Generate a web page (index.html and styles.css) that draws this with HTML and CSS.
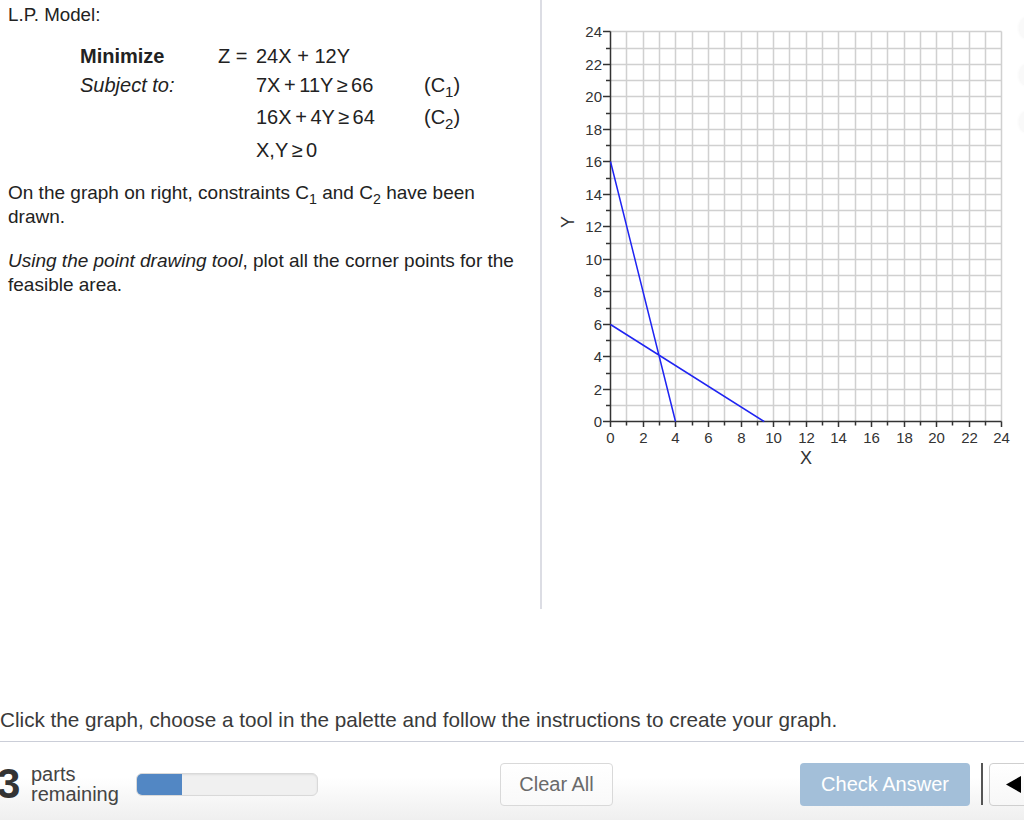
FILE: index.html
```html
<!DOCTYPE html>
<html>
<head>
<meta charset="utf-8">
<link rel="stylesheet" href="styles.css">
</head>
<body>
<div class="top">
  <div class="left">
    <p class="title">L.P. Model:</p>
    <div class="model">
      <span class="b">Minimize</span><span>Z =</span><span>24X + 12Y</span>
      <span class="i c1">Subject to:</span><span class="c3">7X + 11Y ≥ 66</span><span>(C<sub>1</sub>)</span>
      <span class="c3">16X + 4Y ≥ 64</span><span>(C<sub>2</sub>)</span>
      <span class="c3">X,Y ≥ 0</span>
    </div>
    <p class="desc">On the graph on right, constraints C<sub>1</sub> and C<sub>2</sub> have been drawn.</p>
    <p class="desc second"><i>Using the point drawing tool</i>, plot all the corner points for the feasible area.</p>
  </div>
  <div class="right">
    <svg class="graph" width="482" height="609" viewBox="542 0 482 609" xmlns="http://www.w3.org/2000/svg">
      <path class="grid" d="M626.5 31.5V421.5M643.5 31.5V421.5M659.5 31.5V421.5M675.5 31.5V421.5M692.5 31.5V421.5M708.5 31.5V421.5M724.5 31.5V421.5M741.5 31.5V421.5M757.5 31.5V421.5M773.5 31.5V421.5M789.5 31.5V421.5M806.5 31.5V421.5M822.5 31.5V421.5M838.5 31.5V421.5M855.5 31.5V421.5M871.5 31.5V421.5M887.5 31.5V421.5M904.5 31.5V421.5M920.5 31.5V421.5M936.5 31.5V421.5M952.5 31.5V421.5M969.5 31.5V421.5M985.5 31.5V421.5M1001.5 31.5V421.5
      M610.5 405.5H1001.5M610.5 389.5H1001.5M610.5 373.5H1001.5M610.5 356.5H1001.5M610.5 340.5H1001.5M610.5 324.5H1001.5M610.5 308.5H1001.5M610.5 291.5H1001.5M610.5 275.5H1001.5M610.5 259.5H1001.5M610.5 243.5H1001.5M610.5 226.5H1001.5M610.5 210.5H1001.5M610.5 194.5H1001.5M610.5 178.5H1001.5M610.5 161.5H1001.5M610.5 145.5H1001.5M610.5 129.5H1001.5M610.5 113.5H1001.5M610.5 96.5H1001.5M610.5 80.5H1001.5M610.5 64.5H1001.5M610.5 48.5H1001.5M610.5 31.5H1001.5"/>
      <path class="axis" d="M610.5 31.5V421.5H1001.5
      M603 421.5H610.5M606 405.5H610.5M603 389.5H610.5M606 373.5H610.5M603 356.5H610.5M606 340.5H610.5M603 324.5H610.5M606 308.5H610.5M603 291.5H610.5M606 275.5H610.5M603 259.5H610.5M606 243.5H610.5M603 226.5H610.5M606 210.5H610.5M603 194.5H610.5M606 178.5H610.5M603 161.5H610.5M606 145.5H610.5M603 129.5H610.5M606 113.5H610.5M603 96.5H610.5M606 80.5H610.5M603 64.5H610.5M606 48.5H610.5M603 31.5H610.5
      M610.5 421.5V427M626.5 421.5V425.5M643.5 421.5V427M659.5 421.5V425.5M675.5 421.5V427M692.5 421.5V425.5M708.5 421.5V427M724.5 421.5V425.5M741.5 421.5V427M757.5 421.5V425.5M773.5 421.5V427M789.5 421.5V425.5M806.5 421.5V427M822.5 421.5V425.5M838.5 421.5V427M855.5 421.5V425.5M871.5 421.5V427M887.5 421.5V425.5M904.5 421.5V427M920.5 421.5V425.5M936.5 421.5V427M952.5 421.5V425.5M969.5 421.5V427M985.5 421.5V425.5M1001.5 421.5V427"/>
      <g class="ylab">
        <text x="602" y="426.5">0</text><text x="602" y="394.5">2</text><text x="602" y="361.5">4</text><text x="602" y="329.5">6</text><text x="602" y="296.5">8</text><text x="602" y="264.5">10</text><text x="602" y="231.5">12</text><text x="602" y="199.5">14</text><text x="602" y="166.5">16</text><text x="602" y="134.5">18</text><text x="602" y="101.5">20</text><text x="602" y="69.5">22</text><text x="602" y="36.5">24</text>
      </g>
      <g class="xlab">
        <text x="610.5" y="443">0</text><text x="643.5" y="443">2</text><text x="675.5" y="443">4</text><text x="708.5" y="443">6</text><text x="741.5" y="443">8</text><text x="773.5" y="443">10</text><text x="806.5" y="443">12</text><text x="838.5" y="443">14</text><text x="871.5" y="443">16</text><text x="904.5" y="443">18</text><text x="936.5" y="443">20</text><text x="969.5" y="443">22</text><text x="1001.5" y="443">24</text>
      </g>
      <text class="atitle" x="806" y="464">X</text>
      <text class="atitle" x="568" y="228" transform="rotate(-90 568 222)">Y</text>
      <path class="con" d="M610.5 161.5L675.5 421.5M610.5 324.5L764.2 421.5"/>
    </svg>
  </div>
</div>
<div class="palette">
  <div class="tool"></div>
  <div class="tool"></div>
  <div class="tool"></div>
</div>
<p class="hint">Click the graph, choose a tool in the palette and follow the instructions to create your graph.</p>
<div class="footer">
  <span class="count">3</span>
  <span class="parts">parts<br>remaining</span>
  <div class="progress"><div class="fill"></div></div>
  <button class="btn clear">Clear All</button>
  <button class="btn check">Check Answer</button>
  <span class="sep"></span>
  <button class="btn nav"><svg width="16" height="17" viewBox="0 0 16 17"><polygon points="15,0 15,17 0,8.5" fill="#000"/></svg></button>
</div>
</body>
</html>
```

FILE: styles.css
```css
html, body {
  margin: 0;
  padding: 0;
}
body {
  width: 1024px;
  height: 821px;
  overflow: hidden;
  background: #fff;
  color: #222;
  font-family: "Liberation Sans", Arial, Helvetica, sans-serif;
  position: relative;
}
.top {
  display: flex;
  height: 609px;
}
.left {
  flex: none;
  width: 540px;
  border-right: 2px solid #dcdde4;
}
.right {
  flex: none;
  width: 482px;
}
.graph {
  display: block;
}
.title {
  margin: 0;
  padding: 4px 0 0 8px;
  font-size: 18.75px;
  line-height: 22px;
}
.model {
  display: grid;
  grid-template-columns: 138px 38px 168px auto;
  grid-template-rows: 30px 29px 34px 32px;
  align-items: center;
  margin: 15px 0 0 80px;
  font-size: 20px;
  white-space: nowrap;
}
.model .b { font-weight: bold; }
.model .i { font-style: italic; }
.model .c1 { grid-column: 1 / 3; }
.model .c3 {
  grid-column: 3;
  word-spacing: -2px;
}
sub {
  font-size: 0.75em;
  vertical-align: -0.32em;
  line-height: 0;
}
.desc {
  margin: 15px 0 0 8px;
  width: 512px;
  font-size: 19px;
  line-height: 24px;
}
.desc.second {
  margin-top: 20px;
}
.grid {
  fill: none;
  stroke: #d0d0d0;
  stroke-width: 1.5;
}
.axis {
  fill: none;
  stroke: #333;
  stroke-width: 1.5;
}
.con {
  fill: none;
  stroke: #1f24f2;
  stroke-width: 1.5;
}
.ylab text {
  font-family: "Liberation Sans", Arial, sans-serif;
  font-size: 15px;
  fill: #333;
  text-anchor: end;
}
.xlab text {
  font-family: "Liberation Sans", Arial, sans-serif;
  font-size: 15px;
  fill: #333;
  text-anchor: middle;
}
.atitle {
  font-family: "Liberation Sans", Arial, sans-serif;
  font-size: 18px;
  fill: #333;
  text-anchor: middle;
}
.palette {
  position: absolute;
  left: 1019px;
  top: 17px;
  display: flex;
  flex-direction: column;
  gap: 25px;
  opacity: 0.6;
}
.tool {
  width: 40px;
  height: 22px;
  border-radius: 10px;
  background: #f6f6f6;
  box-shadow: 0 0 3px rgba(0, 0, 0, 0.08);
}
.hint {
  margin: 99px 0 0 0;
  font-size: 20.7px;
  line-height: 24px;
  color: #3a3a3a;
  white-space: nowrap;
}
.footer {
  margin-top: 9px;
  border-top: 1px solid #cbced8;
  height: 79px;
  box-sizing: border-box;
  padding-top: 6px;
  display: flex;
  align-items: center;
  background: linear-gradient(#ffffff 0%, #ffffff 45%, #efefef 100%);
}
.count {
  flex: none;
  width: 34px;
  margin-left: -3px;
  font-size: 42px;
  font-weight: bold;
  line-height: 40px;
  color: #333;
}
.parts {
  flex: none;
  width: 105px;
  font-size: 20px;
  line-height: 20px;
  color: #444;
}
.progress {
  flex: none;
  width: 182px;
  height: 23px;
  box-sizing: border-box;
  border: 1px solid #d9d9d9;
  border-radius: 6px;
  background: #f0f0f0;
  overflow: hidden;
  box-shadow: inset 0 1px 2px rgba(0, 0, 0, 0.08);
}
.fill {
  width: 45px;
  height: 100%;
  background: #5287c4;
}
.btn {
  flex: none;
  height: 43px;
  box-sizing: border-box;
  border-radius: 4px;
  font-family: "Liberation Sans", Arial, sans-serif;
  font-size: 20px;
  padding: 0;
  margin: 0;
}
.clear {
  width: 113px;
  margin-left: 182px;
  border: 1px solid #d9d9d9;
  background: linear-gradient(#ffffff, #f9f9f9);
  color: #6a6a6a;
}
.check {
  width: 170px;
  margin-left: 187px;
  border: none;
  background: #a3bfd9;
  color: #fff;
}
.sep {
  flex: none;
  width: 2px;
  height: 42px;
  margin-left: 11px;
  background: #555;
}
.nav {
  width: 60px;
  margin-left: 6px;
  border: 1px solid #cfcfcf;
  background: linear-gradient(#ffffff, #f7f7f7);
  text-align: left;
  padding-left: 16px;
}
.nav svg {
  display: block;
}
```
